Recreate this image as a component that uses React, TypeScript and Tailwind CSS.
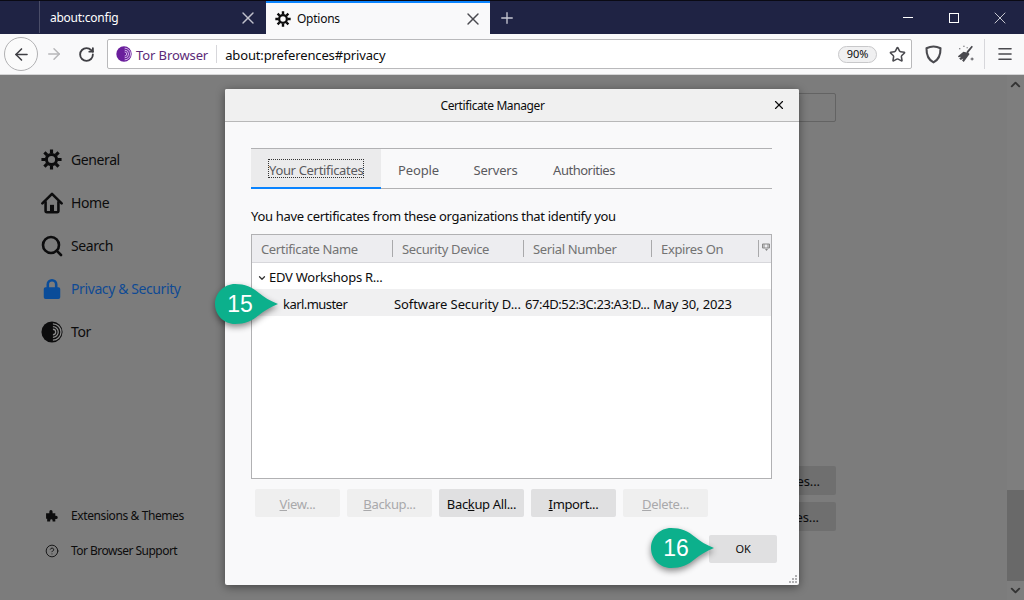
import React from 'react';
import { Star, Search as SearchIcon, Menu, Plus, X, ArrowLeft, ArrowRight, RotateCw, ChevronUp, ChevronDown, CircleHelp } from 'lucide-react';

const Gear = ({ cls }: { cls: string }) => (
  <svg viewBox="0 0 24 24" className={cls} fill="none" stroke="currentColor">
    <circle cx="12" cy="12" r="5.8" strokeWidth="3.4" />
    <g strokeWidth="3.6" strokeLinecap="butt">
      <path d="M12 0.5v4.5M12 19v4.5M0.5 12h4.5M19 12h4.5M3.9 3.9l3.2 3.2M16.9 16.9l3.2 3.2M3.9 20.1l3.2-3.2M16.9 7.1l3.2-3.2" />
    </g>
  </svg>
);

const Home = () => (
  <svg viewBox="0 0 24 24" className="w-[22px] h-[22px] shrink-0" fill="none" stroke="#0c0c0d" strokeWidth="2.8" strokeLinejoin="round">
    <path d="M1.5 12.5 12 2l10.5 10.5" strokeLinecap="round" />
    <path d="M5 10v10.5a1.5 1.5 0 0 0 1.5 1.5h11a1.5 1.5 0 0 0 1.5-1.5V10" />
    <rect x="9.8" y="14" width="4.4" height="8" fill="#0c0c0d" stroke="none" />
  </svg>
);

const Lock = () => (
  <svg viewBox="0 0 24 24" className="w-[22px] h-[22px] shrink-0" fill="#0a4c99">
    <path d="M12 1a6 6 0 0 0-6 6v3H5a2 2 0 0 0-2 2v9a2 2 0 0 0 2 2h14a2 2 0 0 0 2-2v-9a2 2 0 0 0-2-2h-1V7a6 6 0 0 0-6-6Zm-3.2 9V7a3.2 3.2 0 0 1 6.4 0v3Z" />
  </svg>
);

const Onion = ({ cls, color, arc }: { cls: string; color: string; arc: string }) => (
  <svg viewBox="0 0 24 24" className={cls}>
    <circle cx="12" cy="12" r="11.5" fill={color} />
    <path d="M13 3.2a8.8 8.8 0 0 1 0 17.6M13 6.2a5.8 5.8 0 0 1 0 11.6M13 9a3 3 0 0 1 0 6" fill="none" stroke={arc} strokeWidth="1.4" />
  </svg>
);

const Puzzle = () => (
  <svg viewBox="0 0 24 24" className="w-[13px] h-[13px] shrink-0" fill="#0c0c0d">
    <path d="M2 8h6V5a3 3 0 0 1 6 0v3h5v4.5h1.5a3 3 0 0 1 0 6H19V23h-5v-2a2.2 2.2 0 0 0-4.4 0v2H4v-5H2Z" />
  </svg>
);

const Broom = () => (
  <svg viewBox="0 0 24 24" className="w-[20px] h-[20px]" fill="#4a4a4f">
    <path d="M14 9 20 2l1.5 1.3-5.6 7.2 1.6 1.4-7 9.6-2-1.6 1.5-2.6-3 1.8-2-1.6 2.5-2.2-3 .6-1-1.2 6.6-5.5 4 1Z" />
    <path d="M5 5h1.4v1.4H5zM10 2h1.4v1.4H10zM14 4h1.2v1.2H14zM20 16.2h1v1.3h1.3v1h-1.3v1.3h-1v-1.3h-1.3v-1H20z" />
  </svg>
);

const ShieldIcon = () => (
  <svg viewBox="0 0 18 20" className="w-[17px] h-[19px]" fill="none" stroke="#4a4a4f" strokeWidth="2.2" strokeLinejoin="round">
    <path d="M9 1.6C6.5 1.6 4 2.2 1.6 3.4c-.2 7 1.6 12 7.4 15 5.8-3 7.6-8 7.4-15C14 2.2 11.5 1.6 9 1.6Z" />
  </svg>
);

const Callout = ({ n, cls }: { n: string; cls: string }) => (
  <div className={`absolute w-[64px] h-[42px] ${cls}`}>
    <svg viewBox="0 0 64 42" className="absolute inset-0 w-[64px] h-[42px] drop-shadow-[0_3px_3px_rgba(0,0,0,0.45)]">
      <path d="M20 1C30 1 37 4 44 10c5 4 11 8 19 11-8 3-14 7-19 11C37 38 30 41 20 41 9 41 0 32 0 21S9 1 20 1Z" fill="#0cb08c" />
    </svg>
    <span className="absolute left-0 top-0 w-[50px] h-[42px] flex items-center justify-center text-white text-[23px] tracking-normal font-['Liberation_Sans',sans-serif]">{n}</span>
  </div>
);

const NavItem = ({ icon, label, cls = 'text-[#0c0c0d]' }: { icon: React.ReactNode; label: string; cls?: string }) => (
  <div className="flex items-center h-[43px]">
    <div className="w-[30px] flex items-center">{icon}</div>
    <span className={`text-[14px] tracking-[-0.4px] ${cls}`}>{label}</span>
  </div>
);

const Btn = ({ label, disabled, cls = 'w-[85px]' }: { label: [string, string, string]; disabled?: boolean; cls?: string }) => (
  <div className={`${cls} h-[28px] pt-[4px] rounded-[2px] flex items-center justify-center text-[13px] tracking-[-0.35px] ${disabled ? 'bg-[#efefef] text-[#a9a9ab]' : 'bg-[#e0e0e1] text-[#0c0c0d]'}`}>
    {label[0]}<span className="underline">{label[1]}</span>{label[2]}
  </div>
);

const Col = ({ label, w, sep = true }: { label: string; w: string; sep?: boolean }) => (
  <div className={`${w} h-full flex items-center`}>
    {sep && <div className="w-px h-[17px] bg-[#a9a9ab] shrink-0" />}
    <span className="pl-[9px] pt-[2px] text-[13px] tracking-[-0.35px] text-[#737373] whitespace-nowrap">{label}</span>
  </div>
);

export default function App() {
  return (
    <div className="w-[1024px] h-[600px] overflow-hidden flex flex-col bg-[#7c7c7c] font-['Noto_Sans','Open_Sans',sans-serif] tracking-[-0.1px]">
      {/* tab strip */}
      <div className="h-[34px] shrink-0 bg-[#1f2344] border-t border-[#0a0a14] flex items-stretch text-[12px]">
        <div className="w-[40px] border-r border-[#4a4d68] mb-[1px]" />
        <div className="w-[226px] flex items-center justify-between pl-[10px] pr-[8px] text-white">
          <span className="tracking-[-0.25px]">about:config</span>
          <X size={20} className="text-[#c0c1cc]" strokeWidth={1.7} />
        </div>
        <div className="w-[224px] bg-[#f9f9fa] border-t-2 border-[#0a84ff] flex items-center justify-between pl-[9px] pr-[7px] text-[#0c0c0d]">
          <div className="flex items-center gap-[6px]">
            <Gear cls="w-[16px] h-[16px] text-[#0c0c0d]" />
            <span className="tracking-[-0.25px]">Options</span>
          </div>
          <X size={20} className="text-[#4a4a4f]" strokeWidth={1.7} />
        </div>
        <div className="flex-1 flex items-center justify-between pl-[8px] pr-[1px]">
          <Plus size={18} className="text-[#c6c7d1]" strokeWidth={1.8} />
          <div className="flex items-center text-white">
            <div className="w-[46px] flex justify-center"><div className="w-[10px] h-px bg-white" /></div>
            <div className="w-[46px] flex justify-center"><div className="w-[10px] h-[10px] border border-white" /></div>
            <div className="w-[46px] flex justify-center"><X size={20} strokeWidth={0.9} /></div>
          </div>
        </div>
      </div>

      {/* toolbar */}
      <div className="h-[41px] shrink-0 bg-[#f9f9fa] border-b border-[#d4d4d5] flex items-center pl-[4px]">
        <div className="w-[34px] h-[34px] rounded-full border border-[#b1b1b3] bg-[#fbfbfb] flex items-center justify-center shrink-0">
          <ArrowLeft size={19} className="text-[#3f3f44]" strokeWidth={2} />
        </div>
        <div className="w-[32px] flex justify-center shrink-0"><ArrowRight size={18} className="text-[#b7b7b9]" strokeWidth={2} /></div>
        <div className="w-[32px] flex justify-center shrink-0"><RotateCw size={17} className="text-[#3f3f44]" strokeWidth={2.6} /></div>
        <div className="ml-[5px] w-[805px] h-[30px] bg-white border border-[#b9b9bb] rounded-[2px] flex items-center shrink-0">
          <div className="pl-[8px] flex items-center h-full">
            <Onion cls="w-[16px] h-[16px]" color="#6a1e9c" arc="#d9bfee" />
            <span className="pl-[4px] pr-[8px] pt-[4px] text-[13px] text-[#5c2a78]">Tor Browser</span>
            <div className="w-px h-[18px] bg-[#d7d7db]" />
          </div>
          <span className="pl-[8px] pt-[4px] text-[13px] tracking-[-0.14px] text-[#0c0c0d] flex-1">about:preferences#privacy</span>
          <div className="w-[39px] h-[17px] mr-[6px] rounded-full border border-[#c8c8ca] bg-[#f0f0f1] flex items-center justify-center text-[11px] text-[#0c0c0d]">90%</div>
          <div className="w-[28px] flex justify-center"><Star size={17} className="text-[#4a4a4f]" strokeWidth={2.2} /></div>
        </div>
        <div className="w-[43px] flex justify-center shrink-0"><ShieldIcon /></div>
        <div className="w-[20px] flex justify-center shrink-0"><Broom /></div>
        <div className="w-px h-[30px] bg-[#d7d7db] ml-[9px] shrink-0" />
        <div className="flex-1 flex justify-center"><Menu size={18} className="text-[#4a4a4f]" strokeWidth={2.2} /></div>
      </div>

      {/* page */}
      <div className="flex-1 relative flex min-h-0">
        {/* sidebar */}
        <div className="w-[225px] shrink-0 pl-[41px] pt-[63px] pb-[32px] flex flex-col justify-between">
          <div className="flex flex-col">
            <NavItem icon={<Gear cls="w-[21px] h-[21px] text-[#0c0c0d]" />} label="General" />
            <NavItem icon={<Home />} label="Home" />
            <NavItem icon={<SearchIcon size={24} className="text-[#0c0c0d] -ml-[1px]" strokeWidth={2.6} />} label="Search" />
            <NavItem icon={<Lock />} label="Privacy & Security" cls="text-[#0f4a94]" />
            <NavItem icon={<Onion cls="w-[22px] h-[22px]" color="#0c0c0d" arc="#8a8a8a" />} label="Tor" />
          </div>
          <div className="flex flex-col text-[12px] text-[#0c0c0d]">
            <div className="flex items-center h-[35px] pl-[4px] tracking-[-0.4px]"><div className="w-[26px]"><Puzzle /></div>Extensions &amp; Themes</div>
            <div className="flex items-center h-[35px] pl-[4px] tracking-[-0.52px]"><div className="w-[26px]"><CircleHelp size={14} strokeWidth={1.5} /></div>Tor Browser Support</div>
          </div>
        </div>

        {/* main, dimmed */}
        <div className="flex-1 flex flex-col items-end pr-[171px] pt-[18px] min-w-0">
          <div className="w-[100px] h-[29px] border border-[#636363] rounded-[2px]" />
          <div className="mt-[344px] flex flex-col gap-[7px]">
            <div className="w-[100px] h-[29px] pt-[2px] bg-[#6f6f6f] rounded-[2px] flex items-center justify-end pr-[16px] text-[13px] text-[#0c0c0d]">es...</div>
            <div className="w-[100px] h-[29px] pt-[2px] bg-[#6f6f6f] rounded-[2px] flex items-center justify-end pr-[17px] text-[13px] text-[#0c0c0d]">es...</div>
          </div>
        </div>

        {/* scrollbar */}
        <div className="w-[17px] shrink-0 bg-[#7e7e7e] flex flex-col items-center justify-between">
          <ChevronUp size={15} className="text-[#333] mt-[2px]" strokeWidth={3} />
          <div className="flex-1 w-full flex flex-col justify-end"><div className="h-[91px] bg-[#696969]" /></div>
          <ChevronDown size={15} className="text-[#333] my-[2px]" strokeWidth={3} />
        </div>

        {/* modal dialog */}
        <div className="absolute left-[225px] top-[14px] w-[574px] h-[496px] bg-[#f9f9fa] rounded-[2px] shadow-[0_2px_10px_rgba(0,0,0,0.45)] flex flex-col">
          <div className="h-[33px] shrink-0 bg-[#f0f0f0] border-b border-[#b8b8b8] flex items-center justify-center relative rounded-t-[2px] pr-[39px] pt-[2px]">
            <span className="text-[12px] tracking-[-0.4px] text-[#0c0c0d]">Certificate Manager</span>
            <X size={14} className="absolute right-[13px] top-[9px] text-[#0c0c0d]" strokeWidth={2} />
          </div>
          <div className="flex-1 pl-[26px] pr-[27px] pt-[26px] flex flex-col min-h-0">
            <div className="h-[41px] shrink-0 border-t border-b border-[#b1b1b3] flex text-[13px] text-[#5a5a5e]">
              <div className="w-[130px] bg-[#ebebec] border-b-2 border-[#0a84ff] -mb-px flex items-center justify-center">
                <span className="mt-[1px] h-[19px] w-[96px] border border-dotted border-[#333] leading-[20px] text-center whitespace-nowrap tracking-[-0.33px]">Your Certificates</span>
              </div>
              <div className="w-[75px] pt-[4px] flex items-center justify-center">People</div>
              <div className="w-[79px] pt-[4px] flex items-center justify-center tracking-[-0.2px]">Servers</div>
              <div className="w-[98px] pt-[4px] flex items-center justify-center tracking-[-0.5px]">Authorities</div>
            </div>
            <div className="h-[20px] mt-[18px] shrink-0 text-[13px] tracking-[-0.32px] text-[#0c0c0d] flex items-center">You have certificates from these organizations that identify you</div>
            <div className="mt-[7px] h-[245px] shrink-0 border border-[#b1b1b3] bg-white flex flex-col">
              <div className="h-[28px] shrink-0 bg-[#ededf0] border-b border-[#d7d7db] flex items-center">
                <Col label="Certificate Name" w="w-[140px]" sep={false} />
                <Col label="Security Device" w="w-[131px]" />
                <Col label="Serial Number" w="w-[128px]" />
                <Col label="Expires On" w="w-[107px]" />
                <div className="flex-1 h-full flex items-center gap-[3px]">
                  <div className="w-px h-[17px] bg-[#a9a9ab]" />
                  <svg viewBox="0 0 8 8" className="w-[8px] h-[8px] -mt-[3px]" fill="none" stroke="#8a8a8a">
                    <path d="M.5 1h7v4h-7zM2 1v4M6 1v4" /><path d="M3 6h3L4.5 8Z" fill="#8a8a8a" stroke="none" />
                  </svg>
                </div>
              </div>
              <div className="h-[26px] shrink-0 pt-[4px] flex items-center pl-[5px] text-[13px] tracking-[-0.25px] text-[#0c0c0d]">
                <ChevronDown size={10} strokeWidth={3} className="text-[#333]" />
                <span className="pl-[2px]">EDV Workshops R...</span>
              </div>
              <div className="h-[27px] shrink-0 pt-[4px] bg-[#f0f0f1] flex items-center text-[13px] text-[#0c0c0d]">
                <span className="w-[142px] pl-[31px] tracking-[-0.55px]">karl.muster</span>
                <span className="w-[131px] whitespace-nowrap">Software Security D...</span>
                <span className="w-[128px] whitespace-nowrap tracking-[-0.4px]">67:4D:52:3C:23:A3:D...</span>
                <span className="whitespace-nowrap tracking-[-0.15px]">May 30, 2023</span>
              </div>
            </div>
            <div className="mt-[10px] pl-[4px] flex gap-[7px] shrink-0">
              <Btn label={['', 'V', 'iew...']} disabled />
              <Btn label={['', 'B', 'ackup...']} disabled />
              <Btn label={['Bac', 'k', 'up All...']} />
              <Btn label={['', 'I', 'mport...']} />
              <Btn label={['', 'D', 'elete...']} disabled />
            </div>
            <div className="mt-[18px] flex justify-end -mr-[5px] shrink-0">
              <div className="w-[68px] h-[28px] rounded-[2px] bg-[#e0e0e1] text-[11px] text-[#0c0c0d] flex items-center justify-center">OK</div>
            </div>
          </div>
          <svg viewBox="0 0 10 10" className="absolute right-[1px] bottom-[1px] w-[10px] h-[10px]" fill="#b1b1b3">
            <rect x="7" y="1" width="2" height="2" /><rect x="4" y="4" width="2" height="2" /><rect x="7" y="4" width="2" height="2" /><rect x="1" y="7" width="2" height="2" /><rect x="4" y="7" width="2" height="2" /><rect x="7" y="7" width="2" height="2" />
          </svg>
        </div>

        {/* step callouts */}
        <Callout n="15" cls="left-[215px] top-[208px]" />
        <Callout n="16" cls="left-[651px] top-[452px]" />
      </div>
    </div>
  );
}
